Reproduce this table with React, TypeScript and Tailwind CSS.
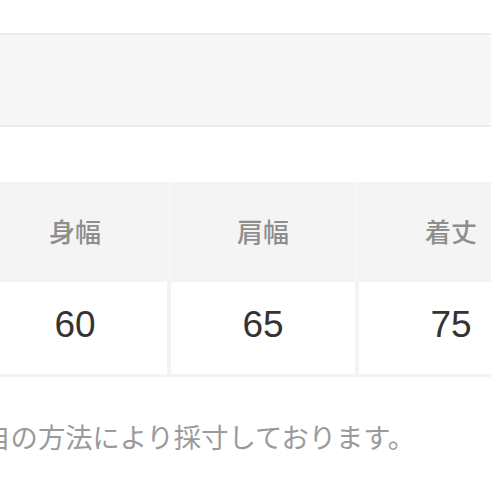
const heads = ["身幅", "肩幅", "着丈"];
const values = ["60", "65", "75"];

export default function App() {
  return (
    <div className="h-[491px] w-[491px] overflow-hidden bg-white">
      <div className="mt-[33px] h-[94px] border-y-2 border-[#ebebeb] bg-[#f7f7f7]" />

      <div className="mt-[55px] ml-[-17px] w-[560px]">
        <div className="flex h-[99px] gap-[4px] bg-[#f6f6f6]">
          {heads.map((h) => (
            <div
              key={h}
              className="flex w-[184px] items-center justify-center bg-[#f4f4f4] pb-[2px] text-[26px] font-medium text-[#8e8e8e] [font-family:'Noto_Sans_CJK_JP',sans-serif]"
            >
              {h}
            </div>
          ))}
        </div>
        <div className="flex h-[96px] gap-[4px] border-b-[3px] border-[#f3f3f3] bg-[#f3f3f3] pt-[1px]">
          {values.map((v) => (
            <div
              key={v}
              className="flex w-[184px] items-center justify-center bg-white pb-[6px] text-[37px] text-[#333] [font-family:'Liberation_Sans',sans-serif]"
            >
              {v}
            </div>
          ))}
        </div>
      </div>

      <p className="mt-[46px] ml-[-44px] whitespace-nowrap text-[27.3px] leading-none text-[#9a9a9a] [font-family:'Noto_Sans_CJK_JP',sans-serif]">
        独自の方法により採寸しております。
      </p>
    </div>
  );
}
